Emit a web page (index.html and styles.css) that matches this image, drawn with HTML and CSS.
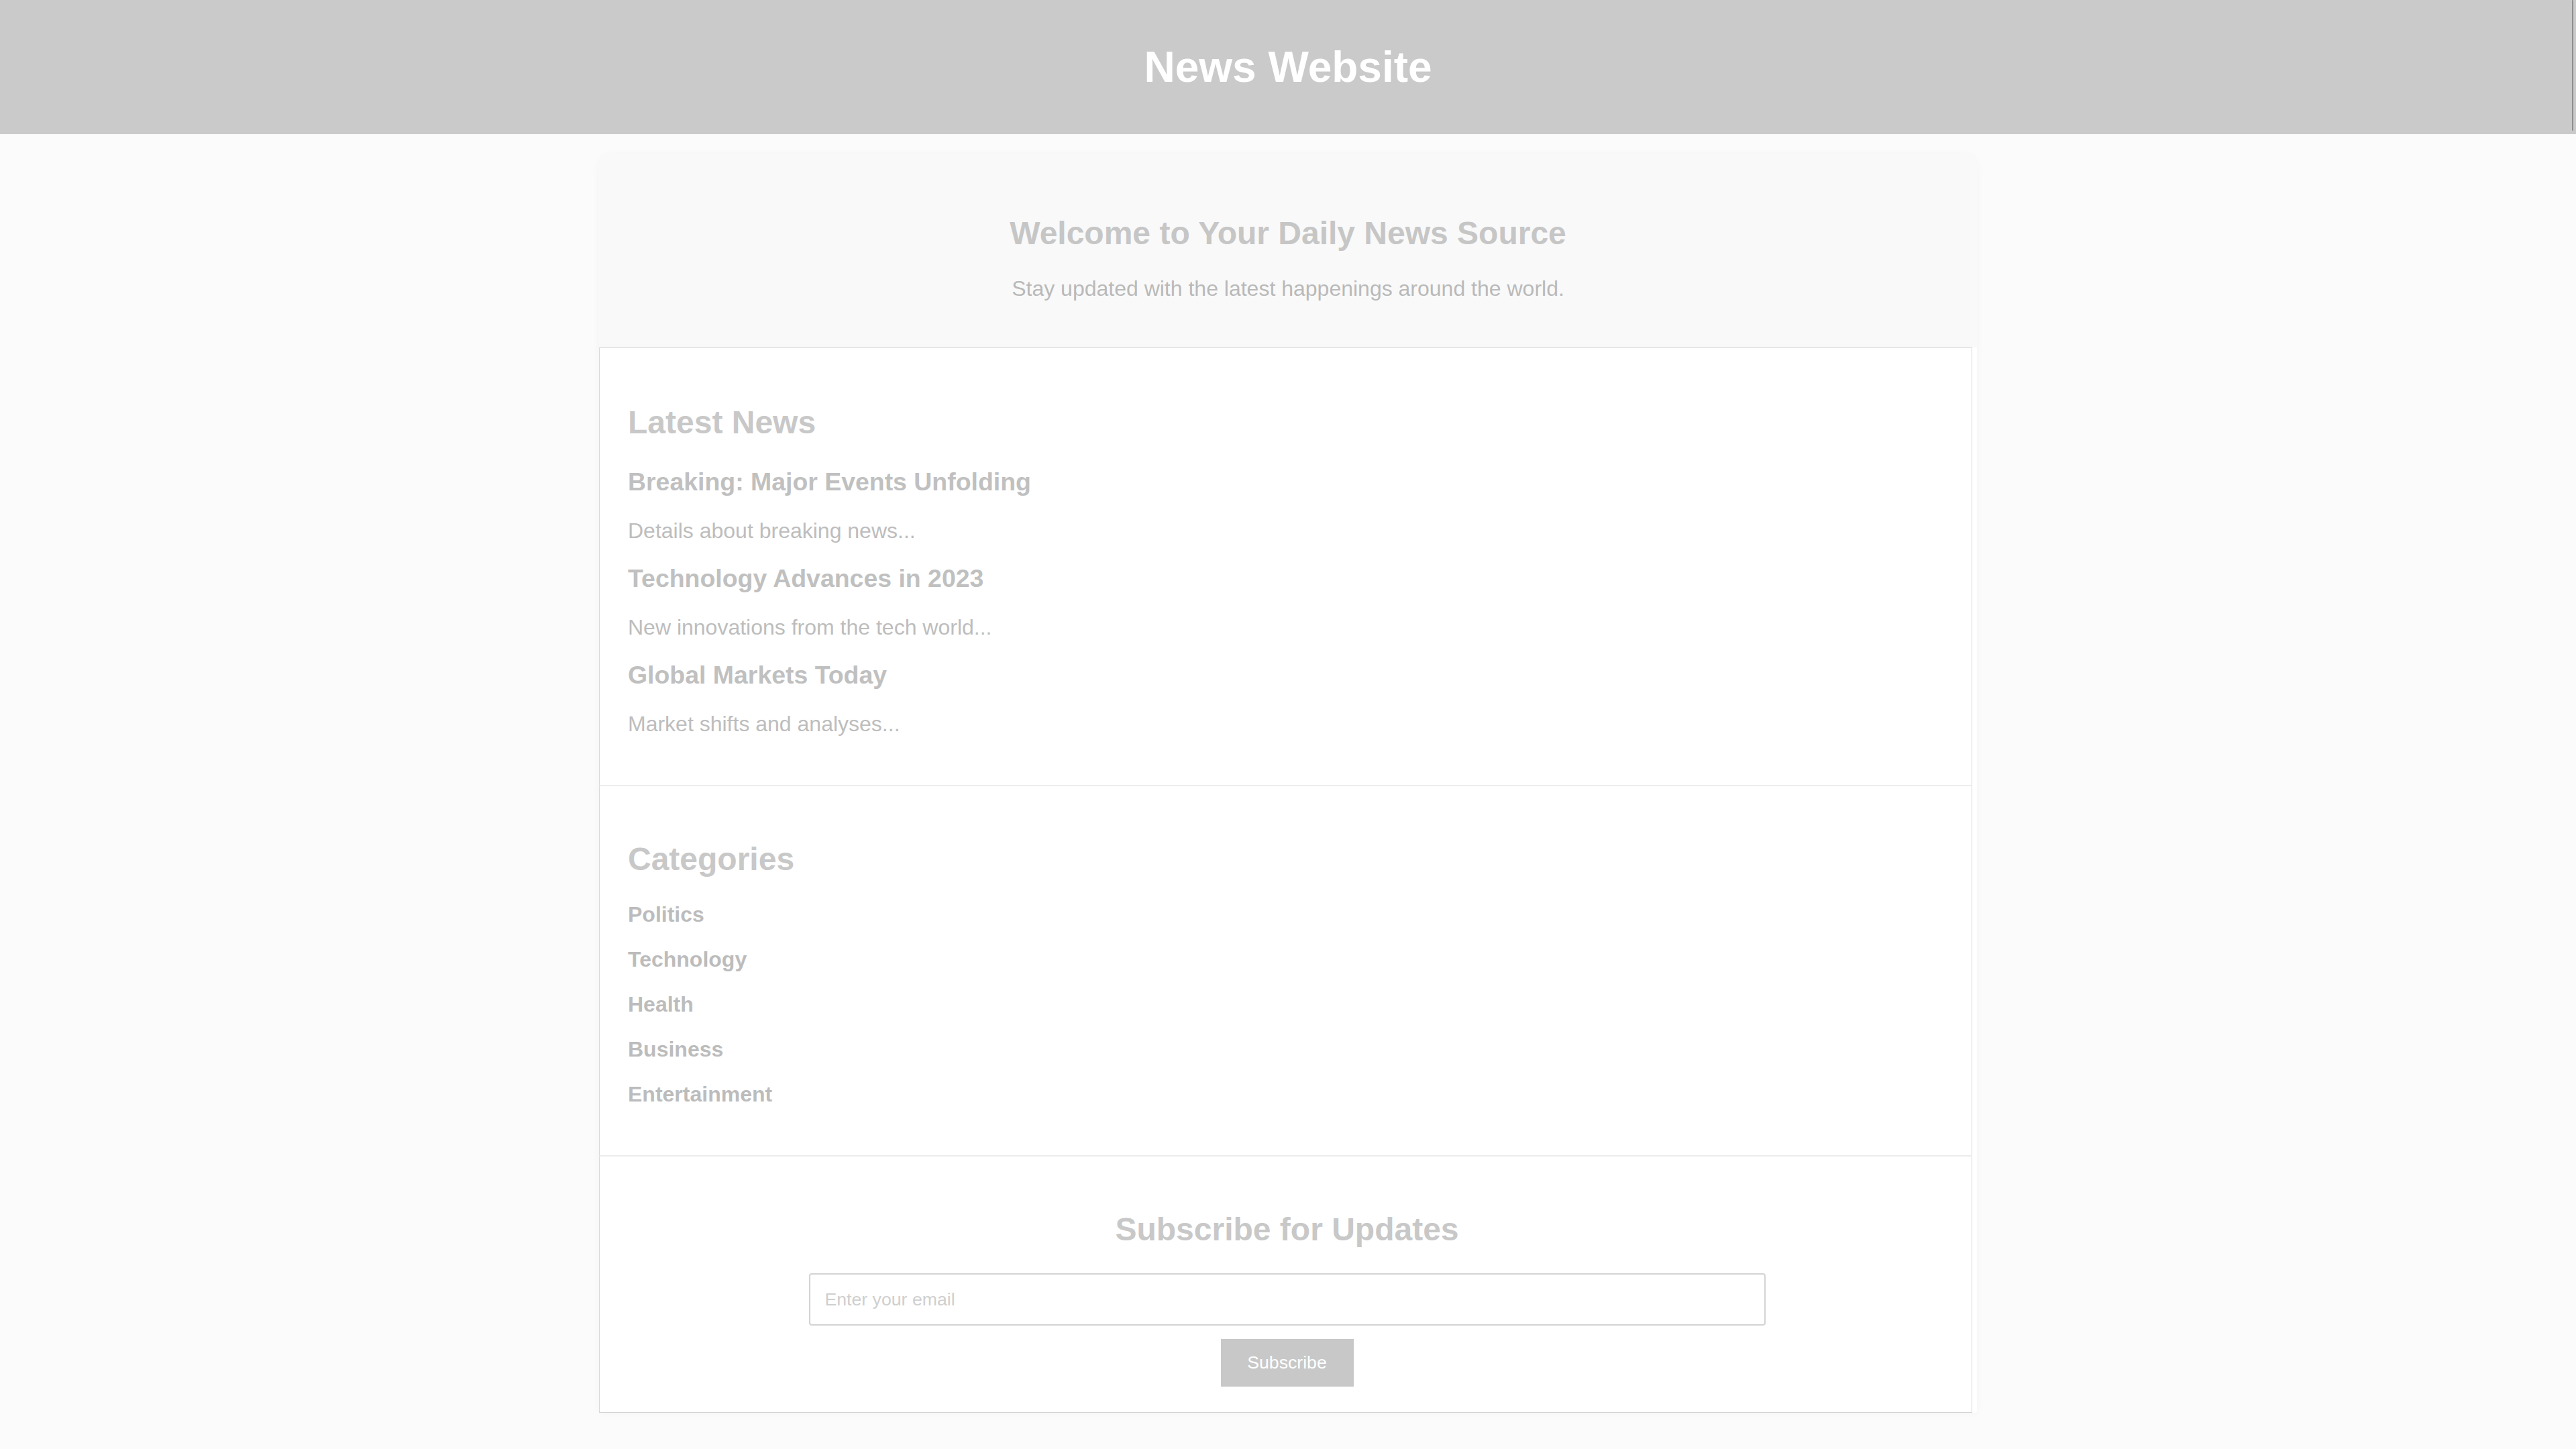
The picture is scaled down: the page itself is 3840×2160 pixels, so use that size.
FILE: index.html
```html
<!DOCTYPE html>
<html lang="en">
<head>
<meta charset="utf-8">
<title>News Website</title>
<link rel="stylesheet" href="styles.css">
</head>
<body>
<header class="site-header">
  <h1 class="site-title">News Website</h1>
</header>
<main class="page">
  <section class="hero">
    <h2 class="hero-title">Welcome to Your Daily News Source</h2>
    <p class="hero-sub">Stay updated with the latest happenings around the world.</p>
  </section>
  <section class="panel panel-news">
    <h2 class="panel-title">Latest News</h2>
    <article class="story">
      <h3 class="story-title">Breaking: Major Events Unfolding</h3>
      <p class="story-text">Details about breaking news...</p>
    </article>
    <article class="story">
      <h3 class="story-title">Technology Advances in 2023</h3>
      <p class="story-text">New innovations from the tech world...</p>
    </article>
    <article class="story">
      <h3 class="story-title">Global Markets Today</h3>
      <p class="story-text">Market shifts and analyses...</p>
    </article>
  </section>
  <section class="panel panel-cats">
    <h2 class="panel-title">Categories</h2>
    <ul class="cat-list">
      <li class="cat-item"><a class="cat-link" href="#">Politics</a></li>
      <li class="cat-item"><a class="cat-link" href="#">Technology</a></li>
      <li class="cat-item"><a class="cat-link" href="#">Health</a></li>
      <li class="cat-item"><a class="cat-link" href="#">Business</a></li>
      <li class="cat-item"><a class="cat-link" href="#">Entertainment</a></li>
    </ul>
  </section>
  <section class="panel panel-sub">
    <h2 class="panel-title panel-title-center">Subscribe for Updates</h2>
    <form class="sub-form" onsubmit="return false;">
      <input class="sub-input" type="email" placeholder="Enter your email">
      <button class="sub-btn" type="submit">Subscribe</button>
    </form>
  </section>
</main>
</body>
</html>
```

FILE: styles.css
```css
* {
  box-sizing: border-box;
}

html, body {
  margin: 0;
  padding: 0;
}

body {
  background: #fbfbfb;
  font-family: "Liberation Sans", Arial, sans-serif;
  color: #c4c4c4;
}

.site-header {
  position: relative;
  height: 200px;
  background: #cacaca;
  display: flex;
  align-items: center;
  justify-content: center;
}

.site-header::after {
  content: "";
  position: absolute;
  top: 0;
  right: 4px;
  width: 2px;
  height: 195px;
  background: #8e8e8e;
  border-radius: 1px;
}

.site-title {
  margin: 0;
  font-size: 64px;
  line-height: 74px;
  font-weight: 700;
  color: #ffffff;
}

.page {
  width: 2054px;
  margin: 30px auto 30px;
  background: #ffffff;
  border-radius: 20px 20px 4px 4px;
  box-shadow: 0 0 12px rgba(0, 0, 0, 0.035);
}

.hero {
  height: 288px;
  padding: 90px 40px 0;
  background: #f9f9f9;
  border-radius: 20px 20px 0 0;
  text-align: center;
}

.hero-title {
  margin: 0 0 37px;
  font-size: 48px;
  line-height: 55px;
  font-weight: 700;
  color: #c6c6c6;
}

.hero-sub {
  margin: 0;
  font-size: 32px;
  line-height: 37px;
  color: #b9b9b9;
}

.panel {
  width: 2047px;
  padding: 40px 38px 40px 42px;
  background: #ffffff;
  border-left: 1px solid #d8d8d8;
  border-right: 1px solid #d8d8d8;
}

.panel-news {
  padding-top: 42px;
  border-top: 1px solid #d4d4d4;
}

.panel + .panel {
  border-top: 2px solid #ececec;
}

.panel-sub {
  padding-bottom: 38px;
  border-bottom: 1px solid #d4d4d4;
}

.panel-title {
  margin: 41px 0 40px;
  font-size: 48px;
  line-height: 55px;
  font-weight: 700;
  color: #c8c8c8;
}

.panel-cats .panel-title {
  margin-bottom: 37px;
}

.panel-sub .panel-title {
  margin-bottom: 38px;
}

.panel-title-center {
  text-align: center;
}

.story {
  margin: 0;
}

.story + .story {
  margin-top: 31px;
}

.story:last-child {
  margin-bottom: 32px;
}

.story-title {
  margin: 0;
  font-size: 37.44px;
  line-height: 43px;
  font-weight: 700;
  color: #c0c0c0;
}

.story-text {
  margin: 33px 0 0;
  font-size: 32px;
  line-height: 37px;
  color: #bdbdbd;
}

.cat-list {
  list-style: none;
  margin: 0 0 32px;
  padding: 0;
  display: flex;
  flex-direction: column;
  gap: 30px;
}

.cat-item {
  font-size: 32px;
  line-height: 37px;
  height: 37px;
}

.cat-link {
  font-size: 32px;
  line-height: 37px;
  font-weight: 700;
  color: #bcbcbc;
  text-decoration: none;
}

.sub-form {
  display: flex;
  flex-direction: column;
  align-items: center;
  gap: 20px;
  margin: 0;
}

.sub-input {
  width: 1426px;
  height: 78px;
  padding: 0 22px;
  border: 2px solid #d4d4d4;
  border-radius: 4px;
  background: #ffffff;
  font-family: "Liberation Sans", Arial, sans-serif;
  font-size: 26.67px;
  color: #bdbdbd;
  outline: none;
}

.sub-input::placeholder {
  color: #cfcfcf;
}

.sub-btn {
  width: 198px;
  height: 71px;
  border: none;
  border-radius: 0;
  background: #c8c8c8;
  color: #ffffff;
  font-family: "Liberation Sans", Arial, sans-serif;
  font-size: 26.67px;
  cursor: pointer;
}
```
